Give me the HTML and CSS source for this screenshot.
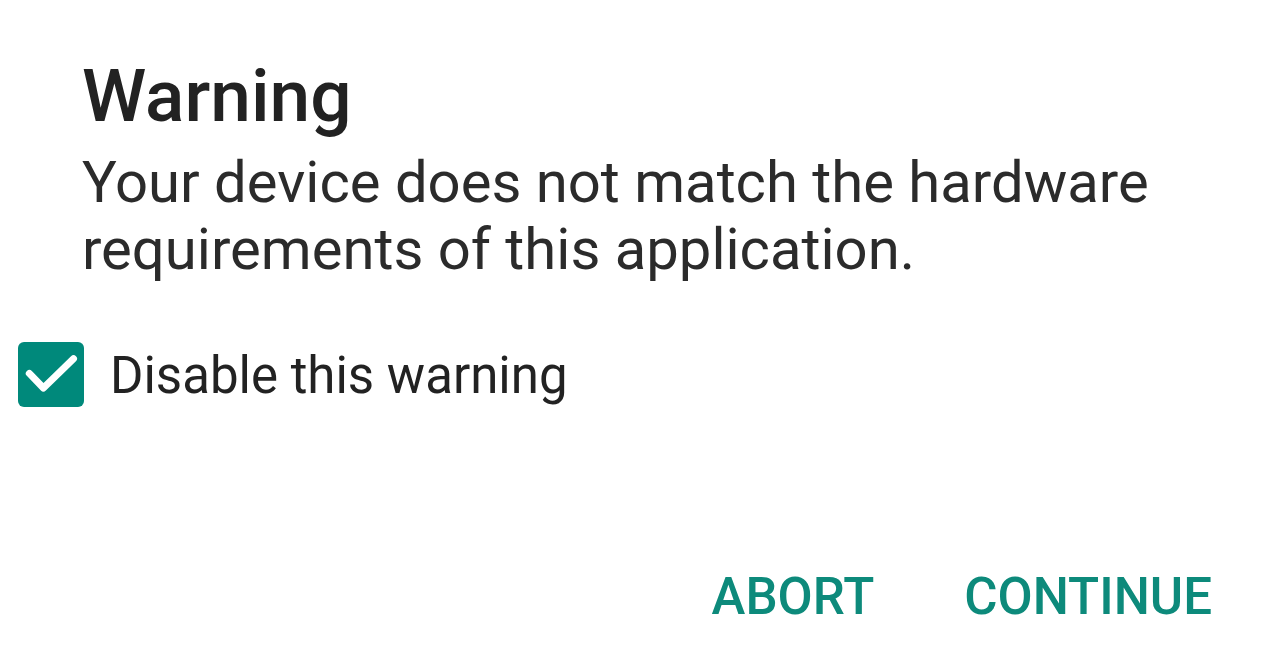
FILE: index.html
```html
<!DOCTYPE html>
<html>
<head>
<meta charset="utf-8">
<link rel="stylesheet" href="styles.css">
</head>
<body>
<div class="dialog">
  <h1 class="title">Warning</h1>
  <p class="message">Your device does not match the hardware requirements of this application.</p>
  <label class="check">
    <span class="box">
      <svg viewBox="0 0 24 24" width="66" height="65"><path d="M4 11.6l5.2 5.4L20.3 6.2" fill="none" stroke="#fff" stroke-width="2.6" stroke-linecap="round" stroke-linejoin="round"/></svg>
    </span>
    <span class="check-label">Disable this warning</span>
  </label>
  <div class="actions">
    <span class="btn">ABORT</span>
    <span class="btn">CONTINUE</span>
  </div>
</div>
</body>
</html>
```

FILE: styles.css
```css
html, body {
  margin: 0;
  padding: 0;
  background: #fff;
}
body {
  font-family: Roboto, "Noto Sans", sans-serif;
  width: 1280px;
  height: 669px;
  overflow: hidden;
}
.dialog {
  display: flex;
  flex-direction: column;
  padding: 56px 0 0 0;
}
.title {
  margin: 0 0 0 82px;
  font-size: 73px;
  font-weight: 500;
  line-height: 80px;
  color: #222;
}
.message {
  margin: 13px 0 0 82px;
  width: 1150px;
  font-size: 58px;
  line-height: 67px;
  color: #2b2b2b;
}
.check {
  display: flex;
  align-items: center;
  margin: 59px 0 0 18px;
}
.box {
  width: 66px;
  height: 65px;
  border-radius: 6px;
  background: #00897b;
  display: flex;
}
.check-label {
  margin-left: 26px;
  padding-top: 2px;
  font-size: 51px;
  color: #222;
}
.actions {
  display: flex;
  justify-content: flex-end;
  gap: 90px;
  margin-top: 160px;
  padding-right: 68px;
}
.btn {
  font-size: 51px;
  font-weight: 500;
  color: #0d8a7b;
}
```
